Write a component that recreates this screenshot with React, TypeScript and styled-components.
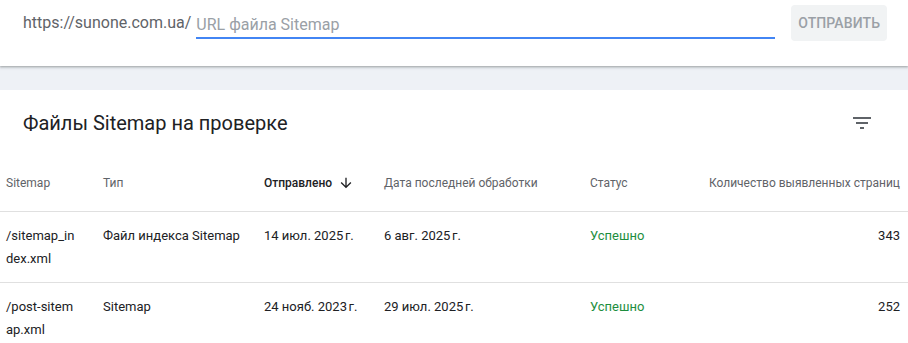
import React from "react";
import styled, { createGlobalStyle } from "styled-components";

const GlobalStyle = createGlobalStyle`
  html, body {
    margin: 0;
    padding: 0;
    background: #eef1f6;
    font-family: Roboto, "Noto Sans", Arial, sans-serif;
    -webkit-font-smoothing: antialiased;
  }
`;

const TopBar = styled.div`
  height: 66px;
  background: #fff;
  box-shadow: 0 1px 2px rgba(60, 64, 67, 0.35), 0 1px 3px 1px rgba(60, 64, 67, 0.12);
  display: flex;
  align-items: flex-start;
  padding: 0 21px 0 23px;
  position: relative;
  z-index: 1;
`;

const Prefix = styled.span`
  font-size: 16px;
  color: #5f6368;
  line-height: 20px;
  margin-top: 13px;
  margin-right: 5px;
  white-space: nowrap;
`;

const UrlInput = styled.input`
  flex: 0 0 579px;
  height: 25px;
  margin-top: 12px;
  border: none;
  border-bottom: 2px solid #4285f4;
  outline: none;
  padding: 0;
  font-family: inherit;
  font-size: 16px;
  color: #202124;
  caret-color: #202124;
  background: transparent;

  &::placeholder {
    color: #9aa0a6;
  }
`;

const SubmitButton = styled.button`
  margin-left: 16px;
  margin-top: 5px;
  width: 97px;
  height: 36px;
  border: none;
  border-radius: 4px;
  background: #f1f3f4;
  color: #9aa0a6;
  font-family: inherit;
  font-size: 14px;
  font-weight: 500;
  letter-spacing: 0.1px;
  cursor: default;
`;

const Card = styled.section`
  margin-top: 24px;
  background: #fff;
`;

const CardHeader = styled.div`
  height: 65px;
  display: flex;
  align-items: center;
  justify-content: space-between;
  padding: 0 34px 0 23px;
`;

const Title = styled.h2`
  margin: 0;
  font-size: 20px;
  font-weight: 400;
  color: #202124;
`;

const IconButton = styled.button`
  width: 24px;
  height: 24px;
  padding: 0;
  border: none;
  background: none;
  color: #5f6368;
  display: flex;
`;

const Row = styled.div<{ $head?: boolean }>`
  display: grid;
  grid-template-columns: 97px 161px 120px 206px 1fr 220px;
  align-items: ${({ $head }) => ($head ? "center" : "start")};
  height: ${({ $head }) => ($head ? "56px" : "auto")};
  border-bottom: 1px solid #e0e0e0;

  &:last-child {
    border-bottom: none;
  }
`;

const HeadCell = styled.div<{ $active?: boolean; $right?: boolean }>`
  padding: 0 8px 0 6px;
  font-size: 12px;
  color: ${({ $active }) => ($active ? "#202124" : "#5f6368")};
  font-weight: ${({ $active }) => ($active ? 500 : 400)};
  display: flex;
  align-items: center;
  justify-content: ${({ $right }) => ($right ? "flex-end" : "flex-start")};
  gap: 6px;
  white-space: nowrap;
`;

const Cell = styled.div<{ $right?: boolean; $ok?: boolean; $path?: boolean }>`
  padding: 12px 8px 12px 6px;
  font-size: 13px;
  line-height: 23px;
  color: ${({ $ok }) => ($ok ? "#1e8e3e" : "#202124")};
  text-align: ${({ $right }) => ($right ? "right" : "left")};
  ${({ $path }) =>
    $path &&
    `
    word-break: break-all;
    padding-right: 17px;
  `}
`;

const FilterIcon = () => (
  <svg width="24" height="24" viewBox="0 0 24 24" fill="currentColor">
    <path d="M10 18h4v-2h-4v2zM3 6v2h18V6H3zm3 7h12v-2H6v2z" />
  </svg>
);

const ArrowDown = () => (
  <svg width="16" height="16" viewBox="0 0 24 24" fill="currentColor">
    <path d="M20 12l-1.41-1.41L13 16.17V4h-2v12.17l-5.58-5.59L4 12l8 8 8-8z" />
  </svg>
);

const rows = [
  {
    path: "/sitemap_index.xml",
    type: "Файл индекса Sitemap",
    sent: "14 июл. 2025\u202Fг.",
    processed: "6 авг. 2025\u202Fг.",
    status: "Успешно",
    pages: 343,
  },
  {
    path: "/post-sitemap.xml",
    type: "Sitemap",
    sent: "24 нояб. 2023\u202Fг.",
    processed: "29 июл. 2025\u202Fг.",
    status: "Успешно",
    pages: 252,
  },
];

export default function App() {
  return (
    <>
      <GlobalStyle />
      <TopBar>
        <Prefix>https://sunone.com.ua/</Prefix>
        <UrlInput placeholder="URL файла Sitemap" autoFocus />
        <SubmitButton>ОТПРАВИТЬ</SubmitButton>
      </TopBar>
      <Card>
        <CardHeader>
          <Title>Файлы Sitemap на проверке</Title>
          <IconButton aria-label="Фильтр">
            <FilterIcon />
          </IconButton>
        </CardHeader>
        <Row $head>
          <HeadCell>Sitemap</HeadCell>
          <HeadCell>Тип</HeadCell>
          <HeadCell $active>
            Отправлено <ArrowDown />
          </HeadCell>
          <HeadCell>Дата последней обработки</HeadCell>
          <HeadCell>Статус</HeadCell>
          <HeadCell $right>Количество выявленных страниц</HeadCell>
        </Row>
        {rows.map((r) => (
          <Row key={r.path}>
            <Cell $path>{r.path}</Cell>
            <Cell>{r.type}</Cell>
            <Cell>{r.sent}</Cell>
            <Cell>{r.processed}</Cell>
            <Cell $ok>{r.status}</Cell>
            <Cell $right>{r.pages}</Cell>
          </Row>
        ))}
      </Card>
    </>
  );
}
